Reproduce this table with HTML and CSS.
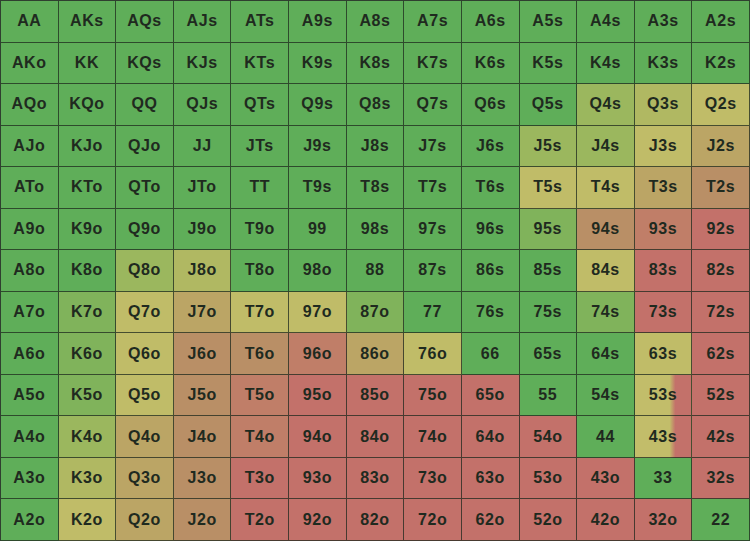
FILE: index.html
```html
<!DOCTYPE html>
<html>
    <head>
        <title>Starting hands</title>
        <link rel="stylesheet" href="styles.css">
    </head>
    <body>
        <div class="chart">
            <div class="cell g">AA</div><div class="cell g">AKs</div><div class="cell g">AQs</div><div class="cell g">AJs</div><div class="cell g">ATs</div><div class="cell g">A9s</div><div class="cell g">A8s</div><div class="cell g">A7s</div><div class="cell g">A6s</div><div class="cell g">A5s</div><div class="cell g">A4s</div><div class="cell g">A3s</div><div class="cell g">A2s</div>
            <div class="cell g">AKo</div><div class="cell g">KK</div><div class="cell g">KQs</div><div class="cell g">KJs</div><div class="cell g">KTs</div><div class="cell g">K9s</div><div class="cell g">K8s</div><div class="cell g">K7s</div><div class="cell g">K6s</div><div class="cell g">K5s</div><div class="cell g">K4s</div><div class="cell g">K3s</div><div class="cell g">K2s</div>
            <div class="cell g">AQo</div><div class="cell g">KQo</div><div class="cell g">QQ</div><div class="cell g">QJs</div><div class="cell g">QTs</div><div class="cell g">Q9s</div><div class="cell g">Q8s</div><div class="cell g">Q7s</div><div class="cell g">Q6s</div><div class="cell g">Q5s</div><div class="cell g2">Q4s</div><div class="cell y0">Q3s</div><div class="cell y">Q2s</div>
            <div class="cell g">AJo</div><div class="cell g">KJo</div><div class="cell g">QJo</div><div class="cell g">JJ</div><div class="cell g">JTs</div><div class="cell g">J9s</div><div class="cell g">J8s</div><div class="cell g">J7s</div><div class="cell g">J6s</div><div class="cell g2">J5s</div><div class="cell g2">J4s</div><div class="cell y">J3s</div><div class="cell t">J2s</div>
            <div class="cell g">ATo</div><div class="cell g">KTo</div><div class="cell g">QTo</div><div class="cell g">JTo</div><div class="cell g">TT</div><div class="cell g">T9s</div><div class="cell g">T8s</div><div class="cell g">T7s</div><div class="cell g">T6s</div><div class="cell y">T5s</div><div class="cell y">T4s</div><div class="cell t">T3s</div><div class="cell o">T2s</div>
            <div class="cell g">A9o</div><div class="cell g">K9o</div><div class="cell g">Q9o</div><div class="cell g">J9o</div><div class="cell g">T9o</div><div class="cell g">99</div><div class="cell g">98s</div><div class="cell g">97s</div><div class="cell g">96s</div><div class="cell g1">95s</div><div class="cell o">94s</div><div class="cell o1">93s</div><div class="cell r">92s</div>
            <div class="cell g">A8o</div><div class="cell g">K8o</div><div class="cell g2">Q8o</div><div class="cell y0">J8o</div><div class="cell g">T8o</div><div class="cell g">98o</div><div class="cell g">88</div><div class="cell g">87s</div><div class="cell g">86s</div><div class="cell g">85s</div><div class="cell y">84s</div><div class="cell r">83s</div><div class="cell r">82s</div>
            <div class="cell g">A7o</div><div class="cell g1">K7o</div><div class="cell y">Q7o</div><div class="cell t">J7o</div><div class="cell y">T7o</div><div class="cell y">97o</div><div class="cell g1">87o</div><div class="cell g">77</div><div class="cell g">76s</div><div class="cell g">75s</div><div class="cell g1">74s</div><div class="cell r">73s</div><div class="cell r">72s</div>
            <div class="cell g">A6o</div><div class="cell g1">K6o</div><div class="cell y">Q6o</div><div class="cell o">J6o</div><div class="cell o">T6o</div><div class="cell o1">96o</div><div class="cell t">86o</div><div class="cell y">76o</div><div class="cell g">66</div><div class="cell g">65s</div><div class="cell g">64s</div><div class="cell y">63s</div><div class="cell r">62s</div>
            <div class="cell g">A5o</div><div class="cell g1">K5o</div><div class="cell y">Q5o</div><div class="cell o">J5o</div><div class="cell o1">T5o</div><div class="cell r">95o</div><div class="cell r">85o</div><div class="cell r">75o</div><div class="cell r">65o</div><div class="cell g">55</div><div class="cell g">54s</div><div class="cell split">53s</div><div class="cell r">52s</div>
            <div class="cell g">A4o</div><div class="cell g2">K4o</div><div class="cell t">Q4o</div><div class="cell o">J4o</div><div class="cell o1">T4o</div><div class="cell r">94o</div><div class="cell r">84o</div><div class="cell r">74o</div><div class="cell r">64o</div><div class="cell r">54o</div><div class="cell g">44</div><div class="cell split">43s</div><div class="cell r">42s</div>
            <div class="cell g">A3o</div><div class="cell y0">K3o</div><div class="cell t">Q3o</div><div class="cell o">J3o</div><div class="cell r">T3o</div><div class="cell r">93o</div><div class="cell r">83o</div><div class="cell r">73o</div><div class="cell r">63o</div><div class="cell r">53o</div><div class="cell r">43o</div><div class="cell g">33</div><div class="cell r">32s</div>
            <div class="cell g">A2o</div><div class="cell y">K2o</div><div class="cell t">Q2o</div><div class="cell o">J2o</div><div class="cell r">T2o</div><div class="cell r">92o</div><div class="cell r">82o</div><div class="cell r">72o</div><div class="cell r">62o</div><div class="cell r">52o</div><div class="cell r">42o</div><div class="cell r">32o</div><div class="cell g">22</div>
        </div>
    </body>
</html>
```

FILE: styles.css
```css
body {
    margin: 0;
    background-color: #5fae59;
}
.chart {
    display: grid;
    grid-template-columns: repeat(13, 1fr);
    grid-template-rows: repeat(13, 1fr);
    width: 750px;
    height: 541px;
    box-sizing: border-box;
    border-top: 1px solid #2f3f2f;
    border-left: 1px solid #2f3f2f;
}
.cell {
    display: flex;
    align-items: center;
    justify-content: center;
    border-right: 1px solid rgba(30, 40, 30, 0.75);
    border-bottom: 1px solid rgba(30, 40, 30, 0.75);
    font-family: "Liberation Sans", Arial, sans-serif;
    font-size: 16px;
    font-weight: bold;
    letter-spacing: 0.6px;
    color: #1f2a1f;
}
.g { background-color: #5fae59; }
.g1 { background-color: #80b35b; }
.g2 { background-color: #9bb75e; }
.y0 { background-color: #b0b862; }
.y { background-color: #c0bc68; }
.t { background-color: #bba565; }
.o { background-color: #b98f66; }
.o1 { background-color: #c07e68; }
.r { background-color: #c3716a; }
.split {
    background: linear-gradient(to right, #c2bd6a 0%, #c2bd6a 62%, #c3716a 72%, #c3716a 100%);
}
```
